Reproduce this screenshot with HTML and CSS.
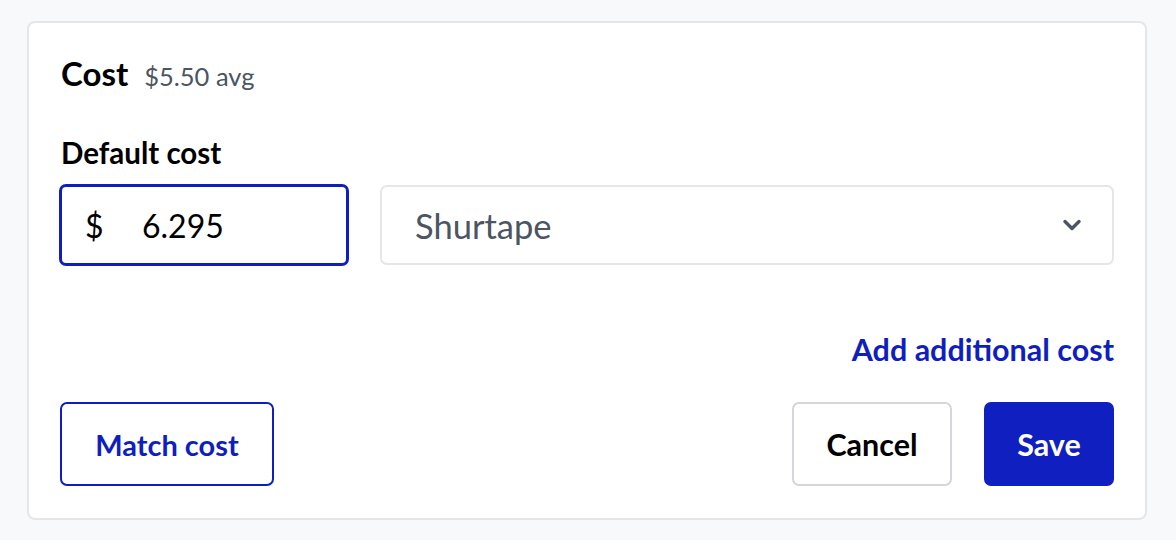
FILE: index.html
```html
<!DOCTYPE html>
<html>
<head>
<meta charset="utf-8">
<link rel="stylesheet" href="styles.css">
</head>
<body>
<div class="card">
  <div class="header">
    <span class="title">Cost</span>
    <span class="avg">$5.50 avg</span>
  </div>
  <div class="label">Default cost</div>
  <div class="fields">
    <div class="money">
      <span class="currency">$</span>
      <span class="amount">6.295</span>
    </div>
    <div class="select">
      <span class="select-text">Shurtape</span>
      <svg class="chevron" width="20" height="14" viewBox="0 0 20 14"><path d="M3 3.5 L10 10.5 L17 3.5" fill="none" stroke="#4b5563" stroke-width="3.4" stroke-linecap="round" stroke-linejoin="round"/></svg>
    </div>
  </div>
  <div class="add-row"><span class="link">Add additional cost</span></div>
  <div class="actions">
    <button class="btn btn-outline-blue">Match cost</button>
    <div class="right-actions">
      <button class="btn btn-outline">Cancel</button>
      <button class="btn btn-primary">Save</button>
    </div>
  </div>
</div>
</body>
</html>
```
FILE: styles.css
```css
* { box-sizing: border-box; }
body {
  margin: 0;
  background: #f8f9fb;
  font-family: Lato, "Noto Sans", sans-serif;
  color: #000;
}
.card {
  margin: 21px 29px 0 27px;
  width: 1120px;
  height: 499px;
  background: #fff;
  border: 2px solid #e5e6ea;
  border-radius: 8px;
  padding: 30px 31px 0 30px;
  display: flex;
  flex-direction: column;
}
.header {
  display: flex;
  align-items: baseline;
  gap: 16px;
  height: 50px;
  padding-left: 2px;
}
.title { font-size: 33px; font-weight: 700; }
.avg { font-size: 25.5px; color: #4b5563; }
.label {
  margin-top: 33px;
  font-size: 29.5px;
  font-weight: 700;
  height: 34px;
  line-height: 34px;
  padding-left: 2px;
}
.fields {
  margin-top: 14px;
  display: flex;
  gap: 31px;
}
.money {
  width: 290px;
  height: 82px;
  border: 3px solid #0f1fbf;
  border-radius: 7px;
  display: flex;
  align-items: center;
  padding-left: 23px;
  font-size: 32px;
}
.currency { width: 57px; }
.select {
  flex: 1;
  margin-top: 1px;
  height: 80px;
  border: 2px solid #e5e6ea;
  border-radius: 7px;
  display: flex;
  align-items: center;
  justify-content: space-between;
  padding: 0 30px 0 33px;
}
.select-text { font-size: 34.5px; color: #4b5563; }
.add-row {
  margin-top: 64px;
  display: flex;
  justify-content: flex-end;
  height: 38px;
  line-height: 38px;
}
.link { font-size: 30.5px; font-weight: 700; color: #0f1fbf; }
.actions {
  margin-top: 34px;
  display: flex;
  justify-content: space-between;
  padding-left: 1px;
}
.right-actions { display: flex; gap: 32px; }
.btn {
  height: 84px;
  border-radius: 7px;
  font-family: inherit;
  font-size: 30.5px;
  font-weight: 700;
  padding: 0;
}
.btn-outline-blue {
  width: 214px;
  background: #fff;
  border: 2px solid #0f1fbf;
  color: #0f1fbf;
  font-size: 29px;
}
.btn-outline {
  width: 160px;
  background: #fff;
  border: 2px solid #d4d6db;
  color: #000;
}
.btn-primary {
  width: 130px;
  background: #0f1fc0;
  border: none;
  color: #fff;
}
```
